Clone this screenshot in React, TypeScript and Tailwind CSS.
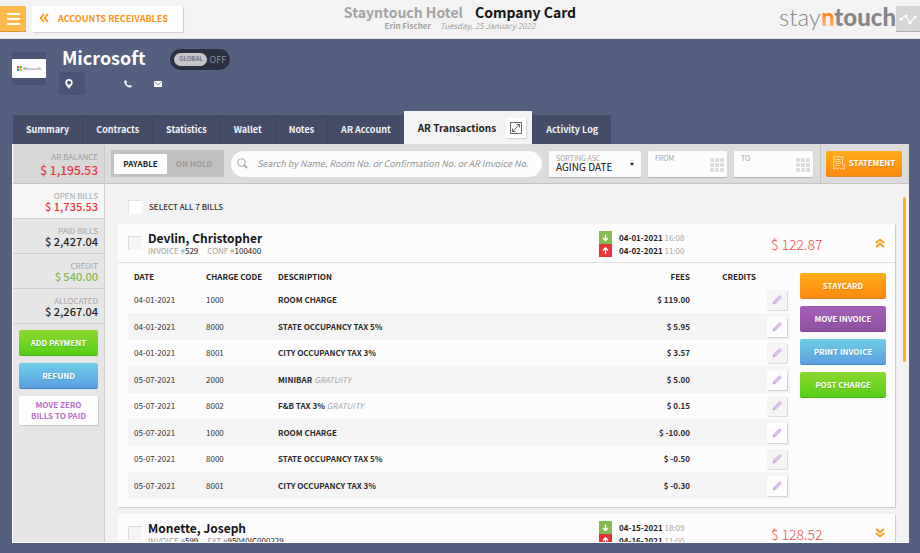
import type { ReactNode } from "react";
import clsx from "clsx";

const tabs = [
  { name: "Summary" },
  { name: "Contracts" },
  { name: "Statistics" },
  { name: "Wallet" },
  { name: "Notes" },
  { name: "AR Account" },
  { name: "AR Transactions", active: true },
  { name: "Activity Log" },
];

const balances = [
  { label: "OPEN BILLS", amount: "$ 1,735.53", color: "text-[#e8353a]", active: true },
  { label: "PAID BILLS", amount: "$ 2,427.04", color: "text-[#222]" },
  { label: "CREDIT", amount: "$ 540.00", color: "text-[#84bb4a]" },
  { label: "ALLOCATED", amount: "$ 2,267.04", color: "text-[#222]" },
];

const charges = [
  { date: "04-01-2021", code: "1000", text: "ROOM CHARGE", fee: "$ 119.00" },
  { date: "04-01-2021", code: "8000", text: "STATE OCCUPANCY TAX 5%", fee: "$ 5.95" },
  { date: "04-01-2021", code: "8001", text: "CITY OCCUPANCY TAX 3%", fee: "$ 3.57" },
  { date: "05-07-2021", code: "2000", text: "MINIBAR", note: "GRATUITY", fee: "$ 5.00" },
  { date: "05-07-2021", code: "8002", text: "F&B TAX 3%", note: "GRATUITY", fee: "$ 0.15" },
  { date: "05-07-2021", code: "1000", text: "ROOM CHARGE", fee: "$ -10.00" },
  { date: "05-07-2021", code: "8000", text: "STATE OCCUPANCY TAX 5%", fee: "$ -0.50" },
  { date: "05-07-2021", code: "8001", text: "CITY OCCUPANCY TAX 3%", fee: "$ -0.30" },
];

const buttonColors = {
  orange: "from-[#ffab1a] to-[#fd8a0e] border-[#dd8420] text-white",
  purple: "from-[#a75fba] to-[#8e51a0] border-[#7d4690] text-white",
  blue: "from-[#70cde6] to-[#5c9fe0] border-[#4a86c8] text-white",
  green: "from-[#8ad82e] to-[#55cf14] border-[#4bb318] text-white",
};

function ActionButton({ color, children }: { color: keyof typeof buttonColors; children: ReactNode }) {
  return (
    <button
      type="button"
      className={clsx(
        "flex h-[26px] w-full items-center justify-center gap-1 rounded-[2px] border-b bg-gradient-to-b text-[8px] leading-none font-bold [text-shadow:0_1px_1px_rgba(0,0,0,0.15)]",
        buttonColors[color]
      )}
    >
      {children}
    </button>
  );
}

function Chevrons({ className }: { className?: string }) {
  return (
    <svg viewBox="0 0 10 10" className={clsx("size-[10px]", className)} fill="none" stroke="#fb9512" strokeWidth="1.8">
      <path d="M1 5 L5 1.6 L9 5 M1 9 L5 5.6 L9 9" />
    </svg>
  );
}

function Pencil() {
  return (
    <svg viewBox="0 0 10 10" className="size-[10px]" fill="#ecdcf1" stroke="#c08fd0" strokeWidth="0.7" strokeLinejoin="round">
      <path d="M0.9 9.1 L1.7 6.5 L7 1.2 Q7.8 0.5 8.6 1.3 Q9.4 2.1 8.8 3 L3.5 8.3 Z" />
      <path d="M2.6 7.4 L7.6 2.4 M1.7 6.5 L3.5 8.3" />
    </svg>
  );
}

function Checkbox({ id, label, white }: { id: string; label?: string; white?: boolean }) {
  return (
    <input
      id={id}
      type="checkbox"
      aria-label={label}
      className={clsx(
        "size-[14px] shrink-0 appearance-none rounded-[1px] border-t border-l",
        white ? "border-[#e2e2e2] bg-[#fdfdfd]" : "border-[#dadada] bg-[#f4f4f4]"
      )}
    />
  );
}

function DateField({ id, label }: { id: string; label: string }) {
  return (
    <div className="relative h-[26px] w-[79px] rounded-[1px] bg-[#fcfcfc] shadow-[0_1px_1px_rgba(0,0,0,0.2)]">
      <label htmlFor={id} className="absolute top-[3px] left-[7px] text-[7px] leading-[9px] text-[#a3a3a3]">
        {label}
      </label>
      <input id={id} type="text" className="h-full w-full bg-transparent px-[7px] pt-2 text-[9px] outline-none" />
      <svg viewBox="0 0 14 14" className="pointer-events-none absolute top-[7px] right-[3px] size-[14px]" fill="#dcdcdc">
        {[0, 5, 10].map((y) =>
          [0, 5, 10].map((x) => <rect key={`${x}-${y}`} x={x} y={y} width="4" height="4" rx="1" />)
        )}
      </svg>
    </div>
  );
}

type Bill = {
  id: string;
  name: string;
  invoice: string;
  refLabel: string;
  refNo: string;
  arrive: string[];
  depart: string[];
  total: string;
  open?: boolean;
};

function BillHeader({ bill }: { bill: Bill }) {
  return (
    <div className="flex h-[39px] items-center border-b border-[#dedede] px-[10px]">
      <Checkbox id={bill.id} label={`Select ${bill.name}`} />

      <div className="ml-[6px] flex-1">
        <h2 className="text-[12px] leading-[15px] font-bold text-[#151515]">{bill.name}</h2>
        <p className="flex gap-[9px] text-[8px] leading-[11px] text-[#a0a0a0]">
          <span>INVOICE #<span className="text-[#222]">{bill.invoice}</span></span>
          <span>{bill.refLabel} #<span className="text-[#222]">{bill.refNo}</span></span>
        </p>
      </div>

      <div className="flex w-[172px] items-center gap-[7px] pt-[2px]">
        <svg viewBox="0 0 13 26" className="h-[26px] w-[13px]" stroke="#fff" strokeWidth="1.4" fill="none">
          <rect width="13" height="13" fill="#86bb50" stroke="none" />
          <rect y="13" width="13" height="13" fill="#e63338" stroke="none" />
          <path d="M6.5 3.5 V9.5 M4 7 L6.5 9.6 L9 7 M6.5 23 V17 M4 19.4 L6.5 16.8 L9 19.4" />
        </svg>
        <div className="text-[8px] leading-[13px] text-[#a5a5a5]">
          <p><span className="font-bold text-[#222]">{bill.arrive[0]}</span> {bill.arrive[1]}</p>
          <p><span className="font-bold text-[#222]">{bill.depart[0]}</span> {bill.depart[1]}</p>
        </div>
      </div>

      <p className="w-[104px] pt-[2px] text-[14px] leading-[18px] font-light text-[#ea4f54]">{bill.total}</p>

      <button type="button" aria-label={bill.open ? "Collapse" : "Expand"}>
        <Chevrons className={bill.open ? "" : "rotate-180"} />
      </button>
    </div>
  );
}

export default function App() {
  return (
    <div className="flex h-screen flex-col overflow-hidden bg-[#555f80] font-['Noto_Sans_CJK_SC',sans-serif] text-[#333]">

      {/* TOP BAR */}
      <header className="grid h-[39px] shrink-0 grid-cols-[1fr_auto_1fr] items-start border-b border-[#dfe0e5] bg-[#f3f3f3]">
        <div className="flex gap-[6px] pt-[6px]">
          <button type="button" aria-label="Menu" className="flex h-[26px] w-[26px] flex-col items-center justify-center gap-[3px] border-b border-[#d9982c] bg-[#fdba4d]">
            <span className="h-[2px] w-[13px] rounded bg-white" />
            <span className="h-[2px] w-[13px] rounded bg-white" />
            <span className="h-[2px] w-[13px] rounded bg-white" />
          </button>
          <button type="button" className="flex h-[26px] items-center gap-[9px] rounded-[1px] bg-[#fdfdfd] pr-[15px] pb-[2px] pl-[7px] text-[9px] leading-none font-bold text-[#fb9512] shadow-[1px_1px_1px_rgba(0,0,0,0.15)]">
            <Chevrons className="-rotate-90" />
            ACCOUNTS RECEIVABLES
          </button>
        </div>

        <div className="pt-[4px] text-center">
          <h1 className="text-[14px] leading-[17px] font-bold text-[#151515]">
            <span className="mr-[12px] text-[#a2a2a2]">Stayntouch Hotel</span>
            Company Card
          </h1>
          <p className="text-[8px] leading-[10px] text-[#a2a2a2]">
            <span className="mr-[9px] font-bold">Erin Fischer</span>
            <em>Tuesday, 25 January 2022</em>
          </p>
        </div>

        <div className="flex justify-end pt-[6px]">
          <div className="font-[Lato] text-[24px] leading-[22px] font-light text-[#85868a]">
            stay
            <span className="bg-gradient-to-b from-[#f98614] from-40% to-[#fdc48a] bg-clip-text font-black text-transparent">n</span>
            <span className="font-black">touch</span>
          </div>
          <button type="button" aria-label="Activity" className="flex h-[26px] w-[24px] items-center justify-center border-b border-[#b0b0b0] bg-[#d6d6d6]">
            <svg viewBox="0 0 18 12" className="h-[12px] w-[18px]" fill="none" stroke="#fff" strokeWidth="1.2">
              <path d="M2 6 L7 3 L11 10 L16 4" />
              <g fill="#fff" stroke="none">
                <circle cx="2" cy="6" r="1.6" />
                <circle cx="7" cy="3" r="1.6" />
                <circle cx="11" cy="10" r="1.6" />
                <circle cx="16" cy="4" r="1.6" />
              </g>
            </svg>
          </button>
        </div>
      </header>

      {/* COMPANY */}
      <section className="flex h-[72px] shrink-0 gap-[13px] pt-[9px] pl-[12px]">
        <div className="mt-[4px] flex h-[33px] w-[34px] items-center rounded-[1px] bg-[#4a5372]">
          <div className="flex h-[19px] w-full items-center justify-center gap-px rounded-[1px] bg-[#fdfdfd]">
            <svg viewBox="0 0 5 5" className="size-[5px]">
              <rect width="2.3" height="2.3" fill="#f25022" />
              <rect x="2.7" width="2.3" height="2.3" fill="#7fba00" />
              <rect y="2.7" width="2.3" height="2.3" fill="#00a4ef" />
              <rect x="2.7" y="2.7" width="2.3" height="2.3" fill="#ffb900" />
            </svg>
            <span className="font-['Open_Sans'] text-[4px] leading-none text-[#555]">Microsoft</span>
          </div>
        </div>

        <div>
          <div className="flex h-[22px] items-center gap-[25px] pl-[3px]">
            <h2 className="pb-[3px] text-[18px] leading-[19px] font-bold text-white">Microsoft</h2>
            <button type="button" role="switch" aria-checked="false" className="flex h-[21px] w-[60px] items-center gap-[2px] rounded-full bg-[#2b3042] pl-[4px] leading-none">
              <span className="flex h-[13px] w-[33px] items-center justify-center rounded-full bg-[#c5c5ca] text-[6px] font-bold text-[#74757c]">GLOBAL</span>
              <span className="text-[9px] text-[#8b8d97]">OFF</span>
            </button>
          </div>

          <div className="mt-[2px] flex items-center">
            <button type="button" aria-label="Address" className="mr-[39px] flex h-[23px] w-[26px] items-center justify-start rounded-[1px] bg-[#4b5473] pl-[6px]">
              <svg viewBox="0 0 8 10" className="h-[10px] w-[8px]" fill="#fff">
                <path fillRule="evenodd" d="M4 0 A3.7 3.7 0 0 1 7.7 3.7 C7.7 6 5 8 4 10 C3 8 0.3 6 0.3 3.7 A3.7 3.7 0 0 1 4 0 Z M4 1.7 A2 2 0 1 0 4 5.7 A2 2 0 1 0 4 1.7 Z" />
              </svg>
            </button>
            <button type="button" aria-label="Phone" className="mr-[22px]">
              <svg viewBox="0 0 8 8" className="size-[8px]" fill="#fff">
                <path d="M0.9 0.4 L2.2 0.2 L3 2.3 L2.2 3 Q3 4.9 4.9 5.8 L5.7 4.9 L7.8 5.8 L7.4 7.1 Q6.8 7.8 5.4 7.5 Q1.2 6.2 0.3 2.2 Q0.2 0.8 0.9 0.4 Z" />
              </svg>
            </button>
            <button type="button" aria-label="Email">
              <svg viewBox="0 0 8 6" className="h-[6px] w-[8px]">
                <rect width="8" height="6" rx="0.8" fill="#fff" />
                <path d="M0.8 1.2 L4 3.8 L7.2 1.2" fill="none" stroke="#555f80" strokeWidth="0.7" />
              </svg>
            </button>
          </div>
        </div>
      </section>

      {/* TABS */}
      <nav className="flex h-[33px] shrink-0 items-end pl-[13px] text-[9px] leading-none font-bold text-[#f4f5f8]">
        {tabs.map((tab) => (
          <a
            key={tab.name}
            href="#"
            className={clsx(
              "flex items-center",
              tab.active
                ? "h-[33px] gap-[10px] bg-[#f3f3f3] pr-[6px] pl-[14px] text-[10px] text-[#222]"
                : "h-[29px] border-l border-[#3d4560] bg-[#454c68] px-[13px] pb-[1px] first:border-l-0"
            )}
          >
            {tab.name}
            {tab.active && (
              <span className="flex size-[20px] items-center justify-center rounded-[1px] bg-white shadow-[1px_1px_1px_rgba(0,0,0,0.15)]">
                <svg viewBox="0 0 12 12" className="size-[12px]" fill="none" stroke="#444" strokeWidth="0.8">
                  <rect x="0.6" y="0.6" width="10.8" height="10.8" />
                  <path d="M3 9 L9 3 M6.5 2.5 H9.5 V5.5 M2.5 6.5 V9.5 H5.5" />
                </svg>
              </span>
            )}
          </a>
        ))}
      </nav>

      {/* PANEL */}
      <main className="mr-[11px] mb-[10px] ml-[12px] flex min-h-0 flex-1 border-b border-l border-white bg-[#f2f2f2]">

        {/* BALANCES */}
        <aside className="w-[92px] shrink-0 border-r border-[#cacaca] bg-[#e6e6e6] text-right">
          <div className="flex h-[40px] flex-col justify-center border-b border-[#c4c4c4] bg-[#d8d8d8] pr-[6px]">
            <p className="text-[8px] leading-[12px] text-[#9b9b9b]">AR BALANCE</p>
            <p className="text-[12px] leading-[14px] font-medium text-[#e8353a]">$ 1,195.53</p>
          </div>

          {balances.map((item) => (
            <div
              key={item.label}
              className={clsx(
                "flex h-[35px] flex-col justify-center border-b border-[#cfcfcf] pr-[6px] pb-[1px]",
                item.active && "bg-[#f6f6f6]"
              )}
            >
              <p className="text-[8px] leading-[11px] text-[#a5a5a5]">{item.label}</p>
              <p className={clsx("text-[11px] leading-[11px] font-medium", item.color)}>{item.amount}</p>
            </div>
          ))}

          <div className="flex flex-col gap-[7px] pt-[6px] pr-[6px] pl-[6px]">
            <ActionButton color="green">ADD PAYMENT</ActionButton>
            <ActionButton color="blue">REFUND</ActionButton>
            <button type="button" className="h-[29px] rounded-[1px] bg-[#fdfdfd] pb-[2px] text-[8px] leading-[11px] font-bold text-[#b870c9] shadow-[1px_1px_1px_rgba(0,0,0,0.15)]">
              MOVE ZERO
              <br />
              BILLS TO PAID
            </button>
          </div>
        </aside>

        <div className="flex min-w-0 flex-1 flex-col">

          {/* FILTERS */}
          <div className="flex h-[40px] shrink-0 items-center gap-[7px] border-b border-[#c4c4c4] bg-[#dcdcdc] pl-[6px]">
            <div className="flex h-[27px] w-[113px] items-center rounded-[1px] bg-[#c1c1c1] p-[3px] text-[8px] leading-none font-bold">
              <button type="button" aria-pressed="true" className="h-[20px] w-[53px] rounded-[1px] bg-[#fdfdfd] text-[#222]">PAYABLE</button>
              <button type="button" aria-pressed="false" className="flex-1 text-[#9c9c9c]">ON HOLD</button>
            </div>

            <label className="flex h-[26px] min-w-0 flex-1 items-center gap-[9px] rounded-full bg-[#fcfcfc] pl-[6px]">
              <svg viewBox="0 0 11 11" className="size-[11px] shrink-0" fill="none" stroke="#a9a9a9">
                <circle cx="4.5" cy="4.5" r="3.7" strokeWidth="1.1" />
                <path d="M7.2 7.2 L10.2 10.2" strokeWidth="1.8" />
              </svg>
              <input
                type="search"
                aria-label="Search bills"
                placeholder="Search by Name, Room No. or Confirmation No. or AR Invoice No."
                className="min-w-0 flex-1 bg-transparent text-[9px] leading-[14px] italic outline-none placeholder:text-[#949494]"
              />
            </label>

            <div className="relative h-[26px] w-[92px] rounded-[1px] bg-[#fcfcfc] shadow-[0_1px_1px_rgba(0,0,0,0.2)]">
              <label htmlFor="sorting" className="absolute top-[3px] left-[7px] text-[7px] leading-[9px] text-[#a3a3a3]">
                SORTING ASC
              </label>
              <select id="sorting" className="h-full w-full appearance-none bg-transparent pt-[7px] pl-[7px] text-[10px] leading-[14px] text-[#111] outline-none">
                <option>AGING DATE</option>
              </select>
              <svg viewBox="0 0 4 3" className="pointer-events-none absolute top-[12px] right-[7px] h-[3px] w-[4px]">
                <path d="M0 0 H4 L2 3 Z" fill="#222" />
              </svg>
            </div>

            <DateField id="from" label="FROM" />
            <DateField id="to" label="TO" />

            <div className="flex h-full items-center border-l border-[#c4c4c4] pr-[7px] pl-[5px]">
              <div className="w-[76px]">
                <ActionButton color="orange">
                  <svg viewBox="0 0 12 14" className="h-[14px] w-[12px]" fill="none" stroke="#ffe2b8" strokeWidth="0.9">
                    <path d="M0.8 0.8 H9.6 V8.8 H11.4 V13 L9.8 11.8 L8.2 13.2 L6.6 11.8 L5 13.2 L3.4 11.8 L0.8 13 Z" />
                    <path d="M2.6 3.5 H7.8 M2.6 5.5 H7.8 M2.6 7.5 H7.8 M2.6 9.5 H6.4" />
                  </svg>
                  STATEMENT
                </ActionButton>
              </div>
            </div>
          </div>

          {/* BILLS */}
          <div className="relative min-h-0 flex-1 overflow-hidden pr-[14px] pl-[13px]">
            <div className="absolute top-[13px] right-[3px] h-[165px] w-[3px] rounded-full bg-[#fdb01e]" />

            <div className="flex h-[40px] items-center gap-[7px] pt-[5px] pl-[10px]">
              <Checkbox id="select-all" white />
              <label htmlFor="select-all" className="text-[8px] leading-none font-medium text-[#333]">SELECT ALL 7 BILLS</label>
            </div>

            <article className="mb-[7px] bg-[#fcfcfc] shadow-[1px_1px_1px_rgba(0,0,0,0.15)]">
              <BillHeader
                bill={{
                  id: "bill-529",
                  name: "Devlin, Christopher",
                  invoice: "529",
                  refLabel: "CONF",
                  refNo: "100400",
                  arrive: ["04-01-2021", "16:08"],
                  depart: ["04-02-2021", "11:00"],
                  total: "$ 122.87",
                  open: true,
                }}
              />

              <div className="flex items-start gap-[10px] pr-[9px] pb-[8px] pl-[10px]">
                <table className="w-full min-w-0 flex-1 table-fixed text-left text-[8px] leading-none">
                  <colgroup>
                    <col className="w-[78px]" />
                    <col className="w-[72px]" />
                    <col />
                    <col className="w-[80px]" />
                    <col className="w-[66px]" />
                    <col className="w-[34px]" />
                  </colgroup>
                  <thead className="text-[#222]">
                    <tr className="h-[24px]">
                      <th className="pt-[4px] pl-[6px] font-bold">DATE</th>
                      <th className="pt-[4px] font-bold">CHARGE CODE</th>
                      <th className="pt-[4px] font-bold">DESCRIPTION</th>
                      <th className="pt-[4px] text-right font-bold">FEES</th>
                      <th className="pt-[4px] text-right font-bold">CREDITS</th>
                      <th />
                    </tr>
                  </thead>
                  <tbody>
                    {charges.map((charge, index) => (
                      <tr key={index} className="group h-[26px] even:h-[27px] even:bg-[#f4f4f4]">
                        <td className="pl-[6px]">{charge.date}</td>
                        <td>{charge.code}</td>
                        <td>
                          <span className="font-bold text-[#2a2a2a]">{charge.text}</span>
                          {charge.note && <em className="ml-[2px] text-[#a5a5a5]">{charge.note}</em>}
                        </td>
                        <td className="text-right font-bold text-[#2a2a2a]">{charge.fee}</td>
                        <td />
                        <td>
                          <button
                            type="button"
                            aria-label={`Edit ${charge.text}`}
                            className="mr-[3px] ml-auto flex size-[20px] items-center justify-center rounded-[1px] bg-[#f4f4f4] shadow-[1px_1px_1px_rgba(0,0,0,0.15)] group-even:bg-[#fdfdfd]"
                          >
                            <Pencil />
                          </button>
                        </td>
                      </tr>
                    ))}
                  </tbody>
                </table>

                <div className="flex w-[86px] flex-col gap-[7px] pt-[10px]">
                  <ActionButton color="orange">STAYCARD</ActionButton>
                  <ActionButton color="purple">MOVE INVOICE</ActionButton>
                  <ActionButton color="blue">PRINT INVOICE</ActionButton>
                  <ActionButton color="green">POST CHARGE</ActionButton>
                </div>
              </div>
            </article>

            <article className="bg-[#fcfcfc] shadow-[1px_1px_1px_rgba(0,0,0,0.15)]">
              <BillHeader
                bill={{
                  id: "bill-599",
                  name: "Monette, Joseph",
                  invoice: "599",
                  refLabel: "EXT",
                  refNo: "95040IC000229",
                  arrive: ["04-15-2021", "18:09"],
                  depart: ["04-16-2021", "11:00"],
                  total: "$ 128.52",
                }}
              />
            </article>
          </div>
        </div>
      </main>
    </div>
  );
}
